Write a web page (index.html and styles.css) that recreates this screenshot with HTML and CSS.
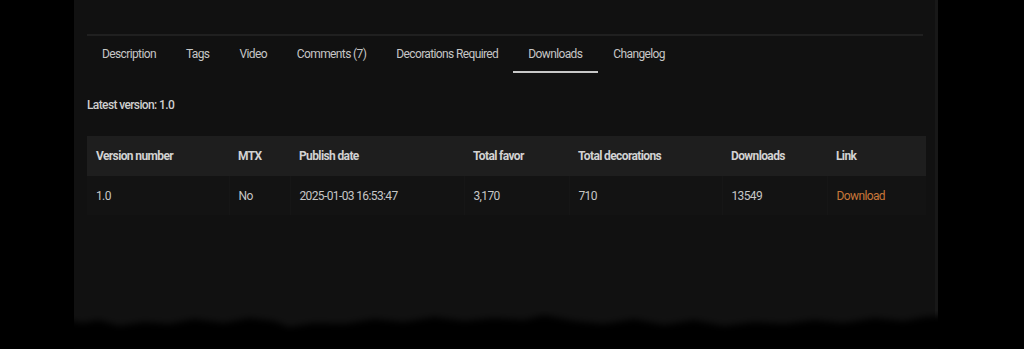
FILE: index.html
```html
<!DOCTYPE html>
<html lang="en">
<head>
    <meta charset="UTF-8">
    <meta name="viewport" content="width=device-width, initial-scale=1.0">
    <title>Downloads</title>
    <link rel="stylesheet" href="styles.css">
</head>
<body>
    <div class="panel">
        <div class="divider"></div>
        <ul class="tabs">
            <li>Description</li>
            <li>Tags</li>
            <li>Video</li>
            <li>Comments (7)</li>
            <li>Decorations Required</li>
            <li class="active">Downloads</li>
            <li>Changelog</li>
        </ul>

        <p class="latest">Latest version: 1.0</p>

        <table class="versions">
            <thead>
                <tr>
                    <th class="c1">Version number</th>
                    <th class="c2">MTX</th>
                    <th class="c3">Publish date</th>
                    <th class="c4">Total favor</th>
                    <th class="c5">Total decorations</th>
                    <th class="c6">Downloads</th>
                    <th class="c7">Link</th>
                </tr>
            </thead>
            <tbody>
                <tr>
                    <td>1.0</td>
                    <td>No</td>
                    <td>2025-01-03 16:53:47</td>
                    <td>3,170</td>
                    <td>710</td>
                    <td>13549</td>
                    <td><a href="#">Download</a></td>
                </tr>
            </tbody>
        </table>

        <svg class="torn" viewBox="0 0 864 56" preserveAspectRatio="none">
            <defs>
                <filter id="soft"><feGaussianBlur stdDeviation="3"/></filter>
            </defs>
            <path filter="url(#soft)" fill="#000" d="M-10 60 L-10 26 L8 30 L25 27 L45 33 L70 29 L95 31 L120 26 L150 30 L175 25 L200 28 L215 34 L240 30 L270 31 L300 26 L330 29 L360 24 L390 28 L420 25 L450 27 L470 22 L500 28 L530 31 L560 26 L590 32 L620 27 L650 33 L680 29 L710 31 L740 27 L770 30 L800 25 L830 28 L850 24 L874 22 L874 60 Z"/>
        </svg>
    </div>
</body>
</html>
```

FILE: styles.css
```css
* {
    box-sizing: border-box;
}
body {
    margin: 0;
    background-color: #000;
    font-family: Roboto, 'Liberation Sans', sans-serif;
    font-size: 12px;
    letter-spacing: -0.62px;
    color: #c9c9c9;
    overflow: hidden;
}
.panel {
    position: relative;
    margin-left: 74px;
    width: 864px;
    height: 349px;
    padding: 34px 9px 0 13px;
    background-color: #111;
    border-right: 3px solid #181818;
}
.divider {
    height: 2px;
    margin-right: 3px;
    background-color: #202020;
}
.tabs {
    display: flex;
    list-style: none;
    margin: 0;
    padding: 0;
}
.tabs li {
    padding: 11px 15px 10px;
    line-height: 14px;
    border-bottom: 2px solid transparent;
    color: #c6c6c6;
}
.tabs li.active {
    border-bottom-color: #c8c8c8;
    padding-right: 16px;
}
.latest {
    margin: 25px 0 0;
    line-height: 14px;
    font-weight: 500;
    color: #cfcfcf;
}
.versions {
    width: 839px;
    margin-top: 24px;
    border-collapse: collapse;
    table-layout: fixed;
}
.versions th {
    height: 40px;
    padding: 0 9px;
    text-align: left;
    font-weight: 700;
    color: #d2d2d2;
    background-color: #1e1e1e;
}
.versions td {
    height: 39px;
    padding: 0 9px;
    color: #c6c6c6;
    background-color: #131313;
    border-left: 1px solid #161616;
}
.versions td:first-child {
    border-left: none;
}
.versions a {
    color: #c8773a;
    text-decoration: none;
}
.c1 { width: 142px; }
.c2 { width: 61px; }
.c3 { width: 174px; }
.c4 { width: 105px; }
.c5 { width: 153px; }
.c6 { width: 105px; }
.c7 { width: 99px; }
.torn {
    position: absolute;
    left: 0;
    bottom: 0;
    width: 864px;
    height: 56px;
}
```
